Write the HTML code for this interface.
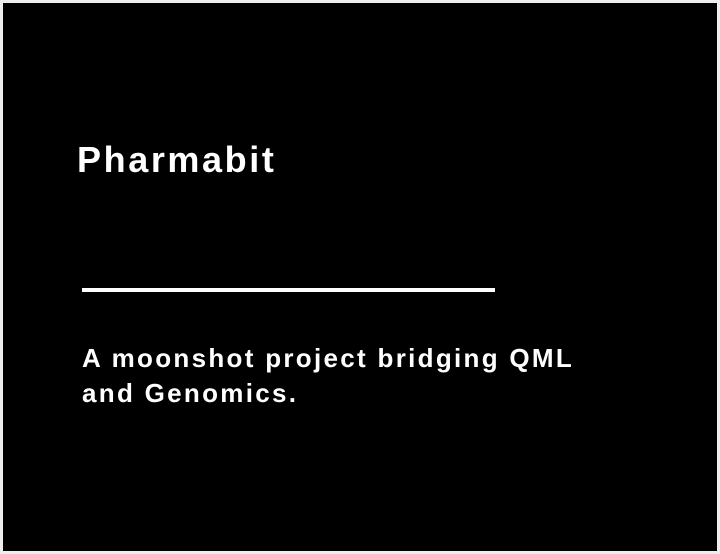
<!DOCTYPE html>
<html><head><style>
html,body{margin:0;padding:0;}
body{width:720px;height:554px;background:#eeeeee;position:relative;overflow:hidden;font-family:"Liberation Sans",sans-serif;}
.box{position:absolute;left:3px;top:3px;width:714px;height:548px;background:#000;}
.t{position:absolute;left:77px;top:139px;color:#fff;font-weight:bold;font-size:36px;letter-spacing:2.6px;}
.l{position:absolute;left:82px;top:288px;width:413px;height:4px;background:#fff;}
.s{position:absolute;left:82px;top:341px;color:#fff;font-weight:bold;font-size:26px;line-height:35px;letter-spacing:2.3px;white-space:nowrap;}
</style></head><body>
<div class="box"></div>
<div class="t">Pharmabit</div>
<div class="l"></div>
<div class="s">A moonshot project bridging QML<br>and Genomics.</div>
</body></html>
